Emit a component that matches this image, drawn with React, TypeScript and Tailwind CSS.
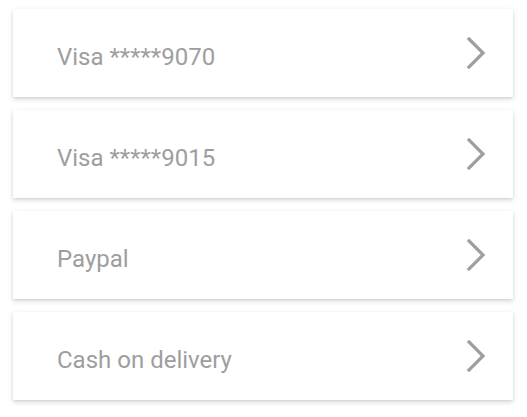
import React from "react";

const items = ["Visa *****9070", "Visa *****9015", "Paypal", "Cash on delivery"];

function Chevron() {
  return (
    <svg width="20" height="32" viewBox="0 0 20 32" fill="none" className="shrink-0">
      <path d="M3 2 L17 16 L3 30" stroke="#9e9e9e" strokeWidth="3.2" strokeLinecap="square" strokeLinejoin="miter" />
    </svg>
  );
}

export default function App() {
  return (
    <div className="w-[527px] h-[417px] bg-white pt-[9px] px-[13px] flex flex-col gap-[13px]" style={{ fontFamily: "Roboto, 'Liberation Sans', sans-serif" }}>
      {items.map((t) => (
        <div key={t} className="h-[88px] w-[500px] bg-white flex items-center justify-between pl-[44px] pr-[27px] shadow-[0_2px_5px_rgba(0,0,0,0.16),0_1px_2px_rgba(0,0,0,0.06)]">
          <span className="text-[24px] leading-[36px] text-[#9e9e9e] font-normal pt-[8px]">{t}</span>
          <Chevron />
        </div>
      ))}
    </div>
  );
}
